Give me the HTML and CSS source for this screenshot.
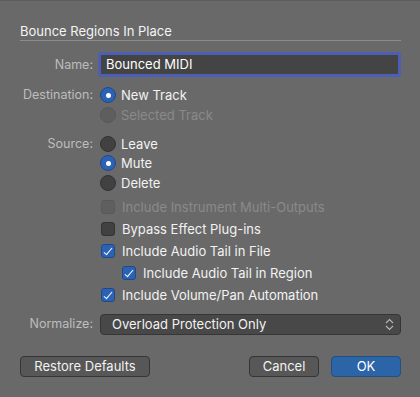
FILE: index.html
```html
<!DOCTYPE html>
<html lang="en">
<head>
  <meta charset="UTF-8">
  <title>Bounce Regions In Place</title>
  <link rel="stylesheet" href="styles.css">
</head>
<body>
  <div class="dialog">
    <h1 class="title">Bounce Regions In Place</h1>

    <div class="row name-row">
      <span class="label">Name:</span>
      <div class="name-field">Bounced MIDI</div>
    </div>

    <div class="row group">
      <span class="label">Destination:</span>
      <div class="options">
        <div class="option"><span class="radio on"></span>New Track</div>
        <div class="option disabled"><span class="radio"></span>Selected Track</div>
      </div>
    </div>

    <div class="row group source">
      <span class="label">Source:</span>
      <div class="options">
        <div class="option"><span class="radio"></span>Leave</div>
        <div class="option"><span class="radio on"></span>Mute</div>
        <div class="option"><span class="radio"></span>Delete</div>
      </div>
    </div>

    <div class="checks">
      <div class="check disabled"><span class="box"></span>Include Instrument Multi-Outputs</div>
      <div class="check"><span class="box"></span>Bypass Effect Plug-ins</div>
      <div class="check"><span class="box on"></span>Include Audio Tail in File</div>
      <div class="check sub"><span class="box on"></span>Include Audio Tail in Region</div>
      <div class="check"><span class="box on"></span>Include Volume/Pan Automation</div>
    </div>

    <div class="row normalize">
      <span class="label">Normalize:</span>
      <div class="popup">
        <span>Overload Protection Only</span>
        <svg class="arrows" width="9" height="13" viewBox="0 0 9 13">
          <path d="M1 5 L4.5 1.5 L8 5 M1 8 L4.5 11.5 L8 8" fill="none" stroke="#b8b8b8" stroke-width="1.1"/>
        </svg>
      </div>
    </div>

    <div class="buttons">
      <button class="btn restore">Restore Defaults</button>
      <span class="spacer"></span>
      <button class="btn cancel">Cancel</button>
      <button class="btn ok">OK</button>
    </div>
  </div>
</body>
</html>
```

FILE: styles.css
```css
/* General */
* {
  margin: 0;
  padding: 0;
  box-sizing: border-box;
}

body {
  font-family: 'Inter', 'Liberation Sans', sans-serif;
  font-size: 12.5px;
  background-color: #696969;
  color: #f2f2f2;
  border-top: 1px solid #5e5e5e;
  height: 397px;
  overflow: hidden;
}

.dialog {
  padding: 0 19px 0 20px;
}

.title {
  font-size: 13px;
  font-weight: 400;
  color: #f4f4f4;
  line-height: 16px;
  padding-top: 22px;
  padding-bottom: 1px;
  border-bottom: 1px solid #8c8c8c;
}

/* Rows */
.row {
  display: flex;
  align-items: flex-start;
}

.label {
  width: 73px;
  margin-right: 7px;
  text-align: right;
  color: #bdbdbd;
  line-height: 20px;
  flex-shrink: 0;
}

.name-row {
  margin-top: 11px;
  align-items: center;
}

.name-field {
  flex: 1;
  height: 25px;
  margin-left: -2px;
  background-color: #444;
  border: 3px solid #4c5fb4;
  border-radius: 3px;
  padding: 0 5px;
  line-height: 19px;
  font-size: 13px;
  color: #fff;
}

.group {
  margin-top: 8px;
}

.source {
  margin-top: 9px;
}

.options {
  display: flex;
  flex-direction: column;
}

.option {
  display: flex;
  align-items: center;
  height: 20px;
  font-size: 13px;
}

.source .option {
  height: 19.5px;
}

.option.disabled {
  color: #8a8a8a;
}

.radio {
  width: 16px;
  height: 16px;
  border-radius: 50%;
  background-color: #414141;
  border: 1px solid #333;
  margin-right: 5px;
  position: relative;
}

.option.disabled .radio {
  background-color: #5e5e5e;
  border-color: #585858;
}

.radio.on {
  background-color: #2b62b4;
  border-color: #1f4a8a;
}

.radio.on::after {
  content: "";
  position: absolute;
  left: 4.5px;
  top: 4.5px;
  width: 5px;
  height: 5px;
  border-radius: 50%;
  background-color: #fff;
}

/* Checkboxes */
.checks {
  margin-top: 3px;
  padding-left: 81px;
}

.check {
  display: flex;
  align-items: center;
  height: 22px;
  font-size: 13px;
}

.check.sub {
  padding-left: 21px;
}

.check.disabled {
  color: #8a8a8a;
}

.box {
  width: 14px;
  height: 14px;
  border-radius: 3px;
  background-color: #414141;
  border: 1px solid #333;
  margin-right: 7px;
  position: relative;
}

.check.disabled .box {
  background-color: #5f5f5f;
  border-color: #595959;
}

.box.on {
  background-color: #2b62b4;
  border-color: #1f4a8a;
}

.box.on::after {
  content: "";
  position: absolute;
  left: 4px;
  top: 1px;
  width: 3px;
  height: 8px;
  border: solid #fff;
  border-width: 0 1.5px 1.5px 0;
  transform: rotate(40deg);
}

/* Popup */
.normalize {
  margin-top: 8px;
  align-items: center;
}

.popup {
  flex: 1;
  height: 21px;
  background-color: #484848;
  border: 1px solid #363636;
  border-radius: 4px;
  display: flex;
  align-items: center;
  justify-content: space-between;
  padding: 0 6px 0 11px;
  font-size: 13px;
}

/* Buttons */
.buttons {
  display: flex;
  margin-top: 21px;
}

.spacer {
  flex: 1;
}

.btn {
  font-family: 'Inter', 'Liberation Sans', sans-serif;
  font-size: 13px;
  color: #f2f2f2;
  height: 21px;
  background-color: #575757;
  border: 1px solid #353535;
  border-radius: 4px;
  padding: 0;
  white-space: nowrap;
}

.restore {
  width: 130px;
}

.cancel {
  width: 70px;
  margin-right: 12px;
}

.ok {
  width: 70px;
  background-color: #2c64a8;
  border-color: #22507f;
  color: #fff;
}
```
